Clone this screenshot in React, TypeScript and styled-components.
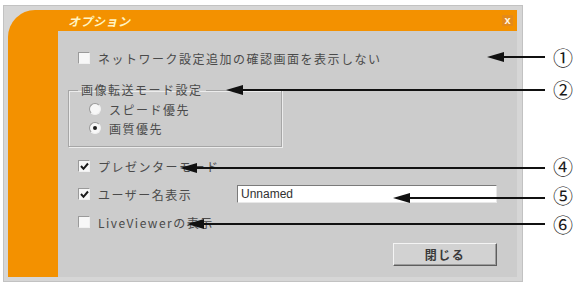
import React from "react";
import styled, { createGlobalStyle } from "styled-components";

const Global = createGlobalStyle`
  html, body { margin: 0; padding: 0; background: #ffffff; }
  body { width: 584px; height: 284px; overflow: hidden; }
`;

const Page = styled.div`
  position: relative;
  width: 584px;
  height: 284px;
  padding: 5px 0 0 3px;
  box-sizing: border-box;
  font-family: "Noto Sans CJK JP", "Noto Sans", sans-serif;
`;

const Window = styled.div`
  width: 520px;
  height: 277px;
  box-sizing: border-box;
  background: #d6d6d6;
  border: 1px solid #c2c2c2;
  padding: 4px 5px 4px 4px;
`;

const Frame = styled.div`
  height: 100%;
  display: grid;
  grid-template-columns: 50px 1fr;
  grid-template-rows: 21px 1fr;
  background: #f39100;
  border-radius: 27px 0 0 0;
`;

const TitleBar = styled.div`
  grid-column: 1 / 3;
  display: flex;
  align-items: center;
  justify-content: space-between;
  padding: 0 4px 0 60px;
`;

const Title = styled.span`
  font-size: 12px;
  font-weight: bold;
  font-style: italic;
  color: #fff4c4;
  letter-spacing: 0.5px;
`;

const CloseBox = styled.span`
  width: 11px;
  height: 11px;
  display: flex;
  align-items: center;
  justify-content: center;
  background: #e48a1a;
  color: #fff8e8;
  font-family: "Liberation Sans", sans-serif;
  font-size: 11px;
  font-weight: bold;
  line-height: 1;
`;

const Content = styled.div`
  grid-column: 2;
  background: #cccccc;
  display: flex;
  flex-direction: column;
  padding: 19px 20px 0 20px;
  color: #4a4a4a;
  font-size: 12px;
  letter-spacing: 1.5px;
`;

const Row = styled.div<{ $h?: number }>`
  display: flex;
  align-items: center;
  height: ${(p) => p.$h ?? 16}px;
`;

const Label = styled.span<{ $w?: number }>`
  margin-left: 8px;
  white-space: nowrap;
  ${(p) => (p.$w ? `width: ${p.$w}px;` : "")}
`;

const Box = styled.span`
  width: 12px;
  height: 12px;
  box-sizing: border-box;
  background: #f7f7f7;
  border: 1px solid;
  border-color: #9a9a9a #f0f0f0 #f0f0f0 #9a9a9a;
  display: flex;
  align-items: center;
  justify-content: center;
  flex: none;
`;

const Round = styled.span`
  width: 12px;
  height: 12px;
  box-sizing: border-box;
  border-radius: 50%;
  background: #f7f7f7;
  border: 1px solid;
  border-color: #9a9a9a #f0f0f0 #f0f0f0 #9a9a9a;
  display: flex;
  align-items: center;
  justify-content: center;
  flex: none;
`;

const Dot = styled.span`
  width: 4px;
  height: 4px;
  border-radius: 50%;
  background: #202020;
`;

const Group = styled.fieldset`
  margin: 16px 0 0 -10px;
  width: 214px;
  box-sizing: border-box;
  padding: 2px 0 9px 20px;
  border: 1px solid #a6a6a6;
  box-shadow: inset 1px 1px 0 #ececec, 1px 1px 0 #ececec;
  display: flex;
  flex-direction: column;
  gap: 1px;
`;

const Legend = styled.legend`
  margin-left: -11px;
  padding: 0 3px;
  font-size: 12px;
  line-height: 16px;
`;

const CheckRows = styled.div`
  margin-top: 5px;
  display: flex;
  flex-direction: column;
`;

const TextInput = styled.div`
  width: 260px;
  height: 18px;
  box-sizing: border-box;
  background: #ffffff;
  border: 1px solid;
  border-color: #7a7a7a #e8e8e8 #e8e8e8 #7a7a7a;
  font-family: "Liberation Sans", sans-serif;
  font-size: 12px;
  letter-spacing: 0;
  color: #303030;
  padding-left: 3px;
  display: flex;
  align-items: center;
`;

const Footer = styled.div`
  margin-top: 7px;
  display: flex;
  justify-content: flex-end;
`;

const Button = styled.div`
  width: 104px;
  height: 23px;
  box-sizing: border-box;
  background: #d2d2d2;
  border: 1px solid;
  border-color: #f4f4f4 #5e5e5e #5e5e5e #f4f4f4;
  box-shadow: inset -1px -1px 0 #9c9c9c;
  display: flex;
  align-items: center;
  justify-content: center;
  font-size: 12px;
  font-weight: bold;
  color: #3a3a3a;
`;

const Overlay = styled.svg`
  position: absolute;
  left: 0;
  top: 0;
  pointer-events: none;
`;

const Callout = styled.span<{ $top: number }>`
  position: absolute;
  left: 553px;
  top: ${(p) => p.$top - 11}px;
  height: 22px;
  line-height: 22px;
  font-family: "Noto Sans CJK JP", sans-serif;
  font-size: 20px;
  color: #1a1a1a;
`;

const Check = () => (
  <svg width="9" height="9" viewBox="0 0 9 9">
    <path d="M1 4 L3.5 6.8 L8 1.5" fill="none" stroke="#1a1a1a" strokeWidth="2" />
  </svg>
);

const CheckBox = ({ checked }: { checked?: boolean }) => (
  <Box>{checked ? <Check /> : null}</Box>
);

const Radio = ({ checked }: { checked?: boolean }) => (
  <Round>{checked ? <Dot /> : null}</Round>
);

const arrows = [
  { y: 57, x: 487 },
  { y: 90, x: 226 },
  { y: 168, x: 180 },
  { y: 198, x: 393 },
  { y: 224, x: 187 },
];

const callouts = [
  { y: 58, t: "①" },
  { y: 90, t: "②" },
  { y: 167, t: "④" },
  { y: 196, t: "⑤" },
  { y: 225, t: "⑥" },
];

export default function App() {
  return (
    <>
      <Global />
      <Page>
        <Window>
          <Frame>
            <TitleBar>
              <Title>オプション</Title>
              <CloseBox>x</CloseBox>
            </TitleBar>
            <div />
            <Content>
              <Row>
                <CheckBox />
                <Label>ネットワーク設定追加の確認画面を表示しない</Label>
              </Row>
              <Group>
                <Legend>画像転送モード設定</Legend>
                <Row $h={18}>
                  <Radio />
                  <Label>スピード優先</Label>
                </Row>
                <Row $h={18}>
                  <Radio checked />
                  <Label>画質優先</Label>
                </Row>
              </Group>
              <CheckRows>
                <Row $h={28}>
                  <CheckBox checked />
                  <Label>プレゼンターモード</Label>
                </Row>
                <Row $h={28}>
                  <CheckBox checked />
                  <Label $w={139}>ユーザー名表示</Label>
                  <TextInput>Unnamed</TextInput>
                </Row>
                <Row $h={28}>
                  <CheckBox />
                  <Label>LiveViewerの表示</Label>
                </Row>
              </CheckRows>
              <Footer>
                <Button>閉じる</Button>
              </Footer>
            </Content>
          </Frame>
        </Window>
        <Overlay width={584} height={284} viewBox="0 0 584 284">
          {arrows.map((a, i) => (
            <g key={i}>
              <line x1={a.x + 12} y1={a.y} x2={545} y2={a.y} stroke="#111" strokeWidth={2} />
              <polygon
                points={`${a.x},${a.y} ${a.x + 17},${a.y - 5} ${a.x + 17},${a.y + 5}`}
                fill="#111"
              />
            </g>
          ))}
        </Overlay>
        {callouts.map((c) => (
          <Callout key={c.t} $top={c.y}>
            {c.t}
          </Callout>
        ))}
      </Page>
    </>
  );
}
